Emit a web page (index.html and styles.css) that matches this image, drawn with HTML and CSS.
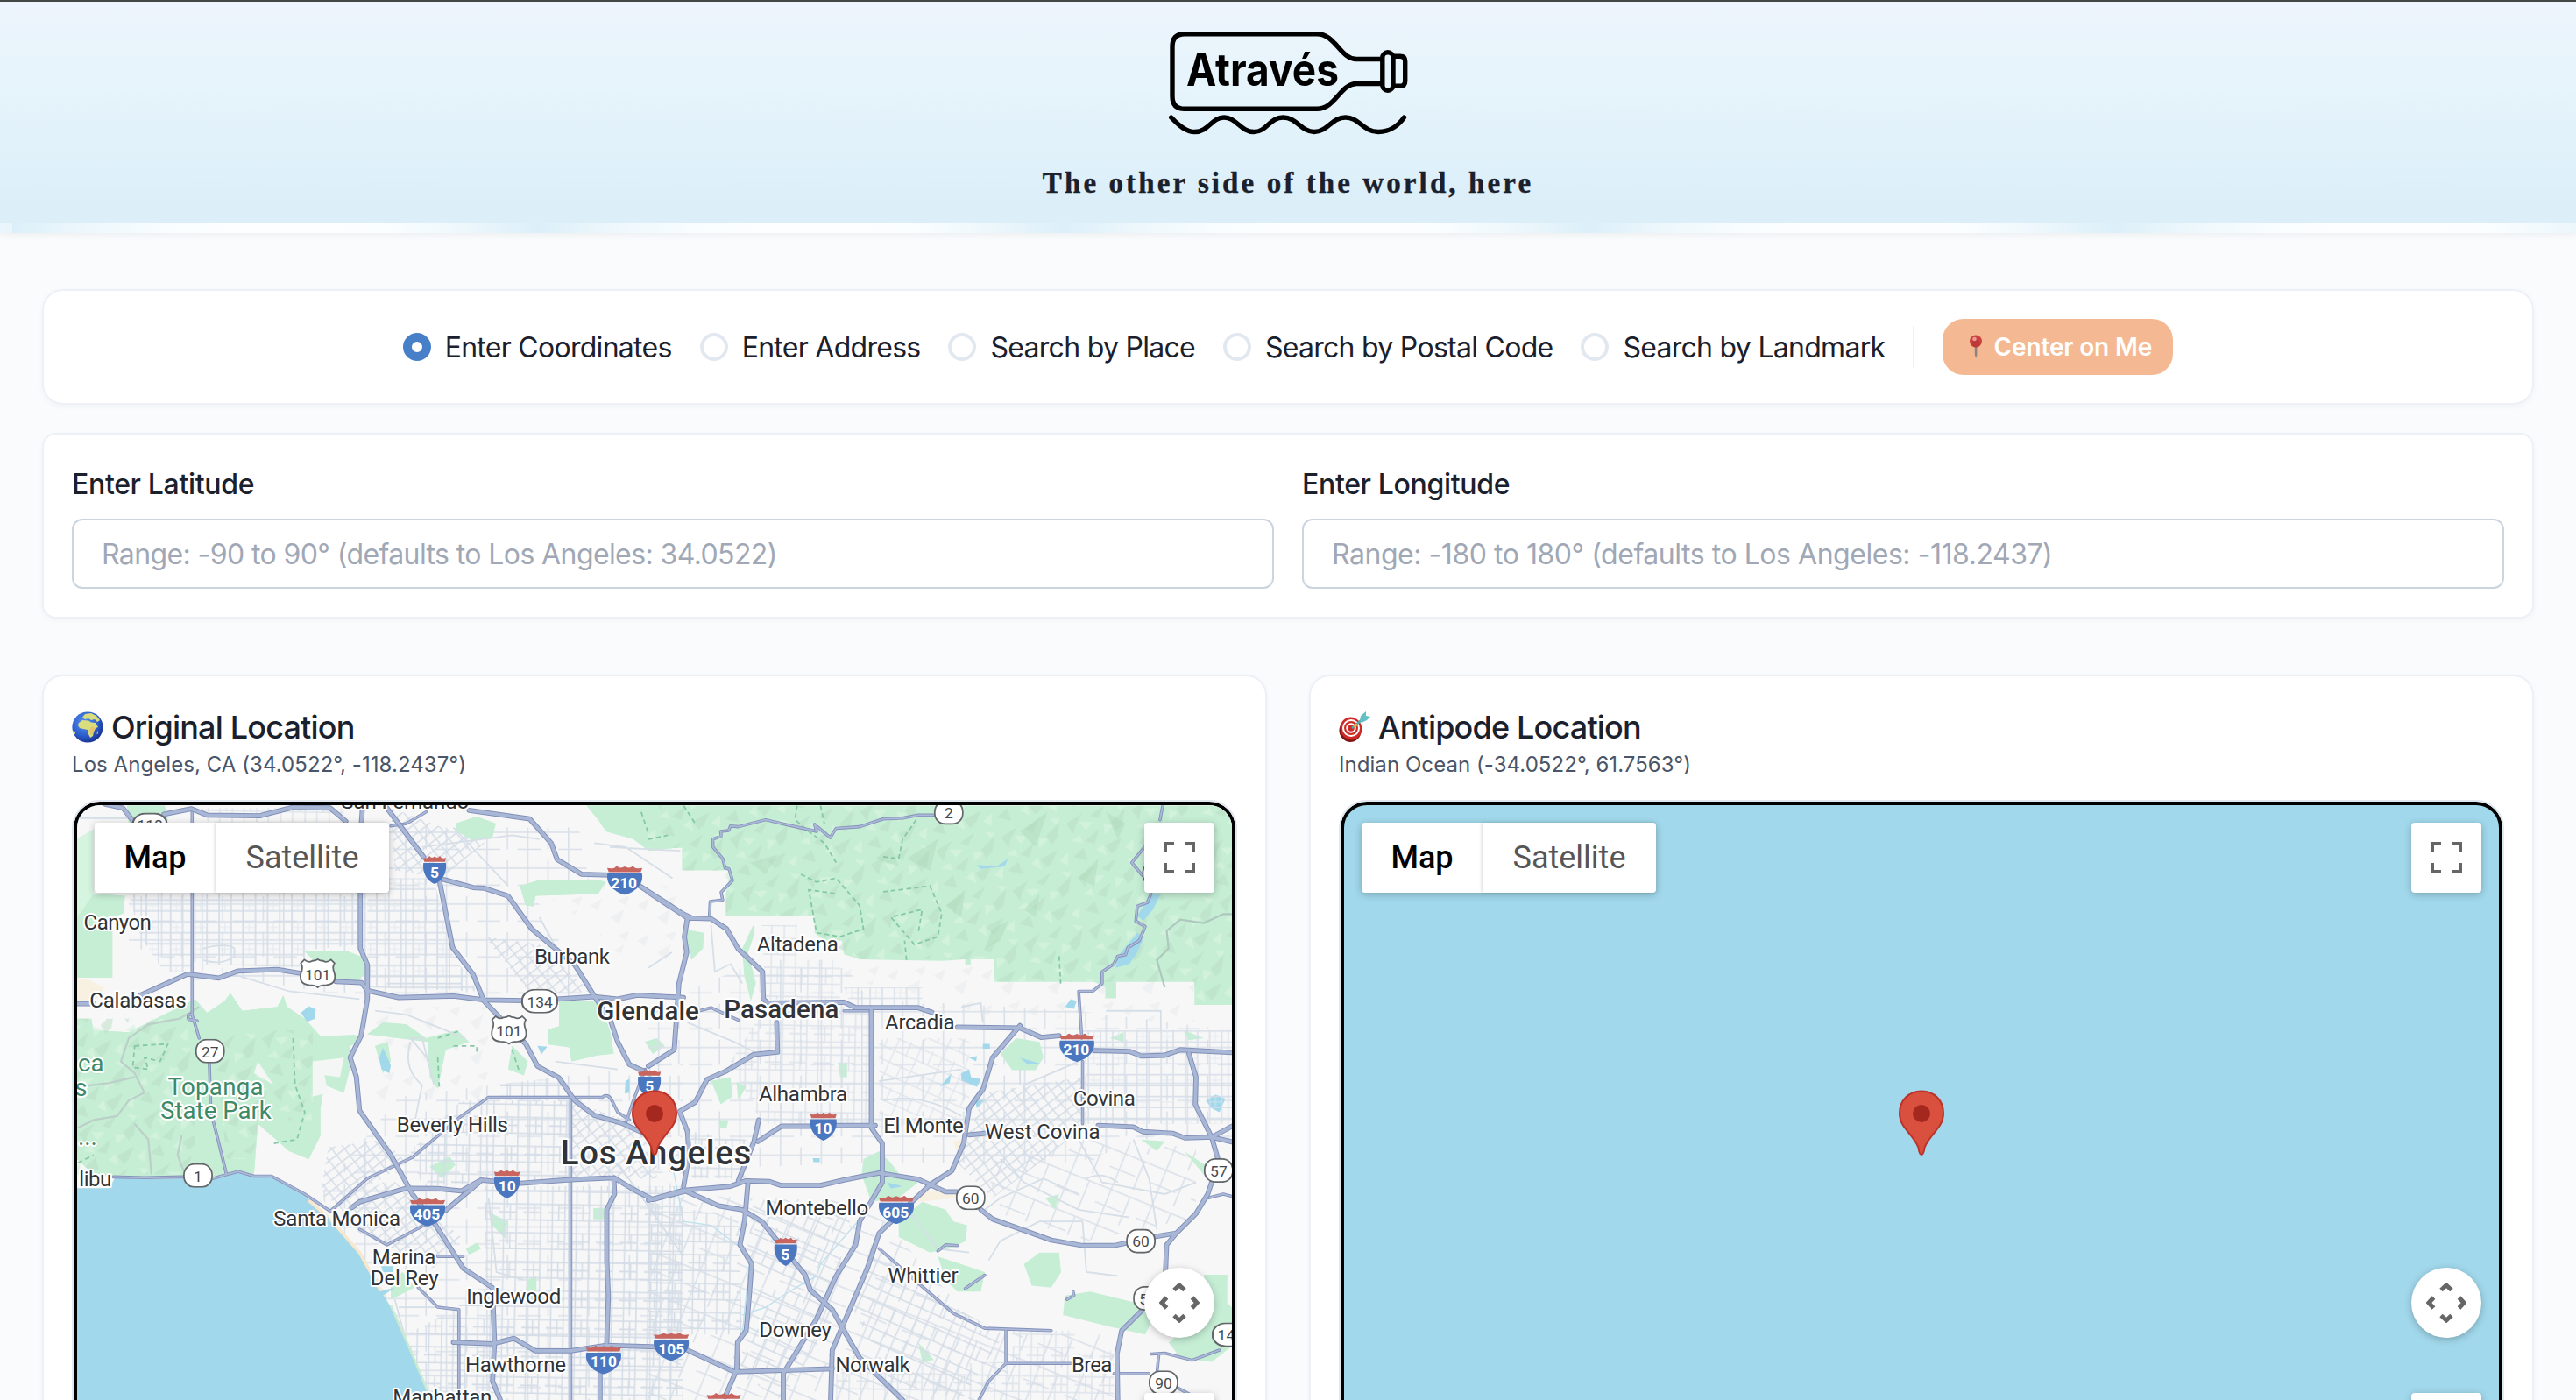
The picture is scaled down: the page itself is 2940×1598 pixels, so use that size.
FILE: index.html
```html
<!DOCTYPE html>
<html lang="en">
<head>
<meta charset="utf-8">
<title>Através</title>
<link rel="stylesheet" href="styles.css">
</head>
<body>
<header class="hero">
  <svg class="logo" viewBox="1332 30 278 130" role="img" aria-label="Através">
    <g fill="none" stroke="#000" stroke-width="5.4" stroke-linecap="round" stroke-linejoin="round">
      <path d="M1577 67.5H1548C1530 67.500 1524 38.700 1503 38.700H1352Q1338 38.700 1338 53V110Q1338 124.300 1352 124.300H1503C1524 124.300 1530 95.500 1548 95.500H1577"/>
      <rect x="1577.800" y="59.800" width="12.200" height="43.400" rx="6"/>
      <path d="M1591 64.300H1598Q1603.700 64.300 1603.700 70V92.500Q1603.700 98.300 1598 98.300H1591"/>
      <path d="M1336.700 134C1346 144 1354 150.500 1363.600 150.500C1379 150.500 1383 134 1397 134C1411 134 1416 150.500 1431 150.500C1446 150.500 1449 134 1464.500 134C1480 134 1485 150.500 1500 150.500C1515 150.500 1520 134 1535.600 134C1551 134 1556 150.500 1573 150.500C1587 150.500 1597 142 1602.500 134"/>
    </g>
    <text class="logo-text" x="1354" y="98" textLength="174" lengthAdjust="spacingAndGlyphs">Através</text>
  </svg>
  <p class="tagline">The other side of the world, here</p>
  <div class="surf"></div>
</header>

<main class="page">
  <section class="card modes">
    <label class="mode"><i class="dot on"></i><span>Enter Coordinates</span></label>
    <label class="mode"><i class="dot"></i><span>Enter Address</span></label>
    <label class="mode"><i class="dot"></i><span>Search by Place</span></label>
    <label class="mode"><i class="dot"></i><span>Search by Postal Code</span></label>
    <label class="mode"><i class="dot"></i><span>Search by Landmark</span></label>
    <span class="rule"></span>
    <button class="center-me">
      <svg class="pushpin" viewBox="0 0 16 28"><path d="M6.800 12h2.600v11L8.200 27 6.800 23z" fill="#8f8580"/><circle cx="8" cy="7.500" r="7" fill="#cb4340"/><circle cx="8" cy="10" r="4.500" fill="#b02f2f" opacity=".5"/><circle cx="6.500" cy="5" r="2.300" fill="#eb9a93"/></svg>
      <span>Center on Me</span>
    </button>
  </section>

  <section class="card coords">
    <div class="field"><label>Enter Latitude</label><div class="input lat">Range: -90 to 90° (defaults to Los Angeles: 34.0522)</div></div>
    <div class="field"><label>Enter Longitude</label><div class="input lng">Range: -180 to 180° (defaults to Los Angeles: -118.2437)</div></div>
  </section>

  <div class="maps">
    <section class="card place">
      <h2><svg class="emoji" viewBox="0 0 36 36"><defs><radialGradient id="sea" cx=".4" cy=".35" r=".7"><stop offset="0" stop-color="#5b93ea"/><stop offset=".6" stop-color="#2d5fce"/><stop offset="1" stop-color="#172d8c"/></radialGradient></defs><circle cx="18" cy="18" r="17.600" fill="url(#sea)"/><path d="M8 13l4-3 7 .5 3 2 5 .5 3 5-3 1-2 4-1 5-3 2-2-4-1-5-5-1-4-1-2-3zM12 7l3-4 7-1 6 3 4 5-3 2-3-3-4 1-3-2-4 1zM1 22l3 1 0 3-2-1zM29 23l1-1-.5 4-1 0z" fill="#d9dd7e"/><path d="M20 21l3-4 4 2-3 6-2 3z" fill="#e8c46a"/></svg><span>Original Location</span></h2>
      <p class="where">Los Angeles, CA (34.0522°, -118.2437°)</p>
      <div class="map">
        <svg class="tiles" viewBox="88 919 1318 760">
          <defs>
            <pattern id="wide" width="104" height="92" patternUnits="userSpaceOnUse"><path d="M0 20H104M0 64H60M26 0V92M78 0V64" fill="none" stroke="#d9e0e9" stroke-width="3.500"/></pattern>
            <pattern id="wideT" width="112" height="98" patternUnits="userSpaceOnUse" patternTransform="rotate(22)"><path d="M0 20H112M0 64H70M26 0V98M78 20V98" fill="none" stroke="#d9e0e9" stroke-width="3.500"/></pattern>
            <pattern id="grid" width="62" height="56" patternUnits="userSpaceOnUse"><path d="M0 6H62M0 34H62M9 0V56M40 0V56" fill="none" stroke="#d4dce6" stroke-width="3.600"/><path d="M24 6V34M9 20H40" stroke="#dfe5ec" stroke-width="2"/></pattern>
            <pattern id="gridB" width="62" height="74" patternUnits="userSpaceOnUse" patternTransform="rotate(1)"><path d="M0 9H62M0 50H62M12 0V74M44 0V74M0 30H44M28 9V50" fill="none" stroke="#d4dce6" stroke-width="3.400"/></pattern>
            <pattern id="gridR" width="50" height="42" patternUnits="userSpaceOnUse" patternTransform="rotate(-38)"><path d="M0 6H50M0 26H50M8 0V42M34 0V42" fill="none" stroke="#d4dce6" stroke-width="3.200"/></pattern>
            <pattern id="gridS" width="60" height="64" patternUnits="userSpaceOnUse" patternTransform="rotate(24)"><path d="M0 6H60M0 38H60M8 0V64M40 0V38" fill="none" stroke="#d4dce6" stroke-width="3.300"/></pattern>
            <pattern id="facets" width="170" height="140" patternUnits="userSpaceOnUse" patternTransform="rotate(-12)"><path d="M6 30L52 12 28 40 20 60zM70 22L112 4 88 34zM120 50L160 24 146 62 128 74zM44 84L86 60 66 96zM92 106L140 92 118 122 104 130zM6 118L36 100 40 134z" fill="#b7dec4" opacity=".5"/><path d="M40 34L74 40 52 56zM100 50L122 60 96 78zM10 76L34 66 38 88zM138 8L164 16 150 26zM68 112L88 100 90 132zM140 120L166 104 158 136z" fill="#d6f3df" opacity=".75"/></pattern>
            <pattern id="hills" width="120" height="90" patternUnits="userSpaceOnUse"><path d="M10 30L40 12 30 44zM60 60L96 40 84 80zM80 16L110 6 100 30z" fill="#eff0f1"/></pattern>
            <symbol id="inter" viewBox="0 0 90 72" preserveAspectRatio="none"><path d="M5 15L1 5 12 6Q20 6 25 0 34 8 45 1 56 8 65 0 70 6 78 6L89 5 85 15z" fill="#c9655f"/><path d="M2 18H88C94 45 72 64 45 72 18 64-4 45 2 18z" fill="#4a77c0"/></symbol>
            <symbol id="oval" viewBox="0 0 76 62" preserveAspectRatio="none"><rect x="2" y="2" width="72" height="58" rx="27" fill="#fff" stroke="#63676a" stroke-width="4"/></symbol>
            <symbol id="us" viewBox="0 0 96 76" preserveAspectRatio="none"><path d="M5 12L14 3Q25 12 34 6 42 6 48 2 54 6 62 6 71 12 82 3L91 12Q84 22 91 38 97 66 70 68 54 68 48 74 42 68 26 68-1 66 5 38 12 22 5 12z" fill="#fff" stroke="#63676a" stroke-width="4"/></symbol>
            <g id="thick" fill="none" stroke-linejoin="round" stroke-linecap="round">
              <g transform="translate(80 900) scale(.44643 .44516)">
                <path d="M90 40L135 50 160 82M240 66L310 52 350 68 485 70 570 48 665 50 705 84M748 40L742 130V410L760 452V540L744 634 716 690 732 740 740 826 820 940 875 1040 935 1120 1005 1230 1080 1280 1085 1420 1080 1520 1100 1568"/>
                <path d="M1020 56L1175 78 1230 140 1245 182 1308 220 1380 222M1450 246L1568 322 1590 332M810 50L904 176M950 232L1030 254 1060 256 1120 276 1180 360 1290 452 1340 532 1380 590 1400 650 1430 708 1470 726"/>
                <path d="M945 240L978 408 1030 476 1058 545 1120 610 1165 655 1195 712 1250 742 1290 800 1340 838 1410 858 1480 890"/>
                <path d="M180 530L300 476 380 486 430 468 530 464 590 474M680 495L745 498 760 518 840 536 980 532 1060 542 1160 544M1245 540L1340 534 1400 540 1450 530 1568 536"/>
                <path d="M20 552H60M720 1075L740 1060 860 1025 940 1026 1000 1032 1050 1004 1090 1008M1145 1013L1280 1003 1390 998 1440 1028 1490 1054 1568 1034M1390 998L1392 1040 1372 1080 1372 1210 1376 1300 1372 1420M960 1082L1048 1008"/>
                <path d="M980 1420L1080 1424 1135 1410 1190 1442 1280 1442 1370 1428 1500 1432M1355 1500V1568"/>
              </g>
              <g transform="translate(740 900) scale(.44643 .44516)">
                <path d="M0 266L100 332 160 334 200 360 230 412 292 470 294 540 306 550 500 548 530 562 690 562 725 574M790 612L950 614 1004 638 1050 634M1140 672L1230 674 1260 686 1320 684 1360 670 1492 677"/>
                <path d="M100 332L92 380 98 420 78 500 66 670 0 712M328 600L330 676 270 682 200 724 150 746 120 804 80 828 100 880 104 940 90 1020M230 1006L270 905 282 850M280 905L340 866 420 866M482 864L580 864M820 888L860 884M1150 864L1240 868 1264 880 1340 884 1372 896 1440 894 1492 866"/>
                <path d="M950 608L880 690 856 770 820 820 806 910 776 980 720 1016 590 1140 560 1230 470 1440 466 1568M570 570V870L598 910 598 1010 540 1110 530 1170 480 1250 430 1360 345 1500 345 1568"/>
                <path d="M0 1056L90 1030 210 1020 250 1006 310 1008 340 1018 440 1018 500 1004 590 986 690 1002 760 1034 800 1034M850 1080L880 1104 1030 1158 1110 1172 1190 1172 1230 1164M1290 1150L1350 1140 1400 1090 1430 1040 1440 1010M1350 1140L1325 1170 1322 1240M1260 1340L1210 1390 1198 1450 1200 1568M1382 680L1400 740 1398 810 1440 894 1456 950M1440 894L1492 906"/>
                <path d="M90 1030L180 1070 240 1080 290 1110 330 1160M370 1210L400 1246 414 1286 470 1336 500 1390 540 1460 650 1568M255 1006L246 1110 234 1170 264 1220 258 1300 250 1390 228 1420 226 1490 196 1560M100 1440L220 1496 470 1488"/>
              </g>
            </g>
            <g id="thin" fill="none" stroke-linejoin="round" stroke-linecap="round">
              <g transform="translate(80 900) scale(.44643 .44516)">
                <path d="M312 52V90M312 260V470V580L330 640M312 580Q298 576 303 592L325 596M356 705L360 830 378 900 400 990M110 996L190 998 290 996M365 1000L400 990 430 982 470 994 515 994 600 1040 665 1084M665 1084L760 1000 875 946 1000 840 1070 792 1360 792Q1375 780 1385 800L1400 830 1430 850M1280 800V1568M740 1130L810 1170 935 1104M890 1280L940 1330 994 1336V1568M940 1200H1005M820 96L860 90 910 60M1470 720L1440 800 1420 860"/>
              </g>
              <g transform="translate(740 900) scale(.44643 .44516)">
                <path d="M730 68L690 68 650 76 600 78 540 98 480 102 465 126 425 92 430 110 350 92 300 80 230 98 210 96 205 108 185 110 186 122 165 130 165 150 190 180 196 204 206 206 215 236 186 266 190 286 158 290 156 330M1315 44L1308 80M1268 150L1236 190 1262 222M1285 270L1276 292 1250 302 1246 340 1270 354 1255 390 1226 408 1220 426 1200 430 1190 450 1160 470 1160 500 1136 520 1100 520 1108 640M1110 700V860M130 570L160 562 230 594M500 570H570M590 1180L680 1260 780 1346 860 1384 1030 1390M914 1390V1474L870 1520 845 1568M915 1474H1080M1190 1500H1280M1340 1530L1400 1562M1285 1450L1320 1448 1390 1466 1460 1440M1305 1450L1300 1500M810 1282L860 1248M1070 1310L1088 1300 1086 1290M1430 1050L1470 1040 1492 1046M740 1186L760 1170 790 1172"/>
              </g>
            </g>
          </defs>
          <rect x="80" y="900" width="1340" height="800" fill="#f7f7f7"/>
          <!-- hills, arterial streets and parkland -->
          <g transform="translate(80 900) scale(.44643 .44516)">
            <path d="M1180 250H1568V440H1480L1400 420 1300 330z" fill="url(#hills)"/>
            <path d="M760 560H1080L1080 800H780z" fill="url(#hills)"/>
            <path d="M150 100H1300L1330 250 1180 260 1330 540 760 540 330 470 150 400zM840 790L1568 700V1568H900L640 1040z" fill="url(#wide)"/>
            <g id="parkL" fill="#c6eed5">
              <path d="M18 130L60 105V270L140 275 136 320 108 330V485H18z"/>
              <path d="M18 590H54L60 620 150 625 200 600 320 540 350 575 395 545 410 525 440 570 530 560 545 530 555 560 600 590 640 635 730 632 740 650 716 660 720 700 700 780 650 760 640 820 640 890 610 950 560 930 515 890 480 860 470 990 430 980 400 992 365 1000 115 996 60 990 18 950z"/>
              <path d="M598 416H706L756 436V470L735 496H680zM145 44H242L250 80 230 90 150 88zM1320 44H1568V150L1480 160 1440 130 1370 110 1350 80zM985 90L1040 72 1088 90 1080 124 1030 134 990 110zM1150 250L1200 235H1350L1370 240 1350 270 1190 275 1185 302 1165 300z"/>
              <path d="M1250 545H1350L1380 620 1390 680 1350 684 1282 700 1276 664 1222 656 1222 618 1250 610zM760 630L800 600 860 605 910 640 990 620 1020 650 960 670 940 770 920 740 915 650 840 640z"/>
              <path d="M780 660L812 650 820 700 800 730zM1130 660L1170 700 1160 735 1120 720zM920 970L970 944 985 965 950 1000zM1070 1086L1118 1110 1112 1154 1080 1120zM1168 1260L1192 1252V1314L1165 1300zM1338 1076H1365V1104H1338zM1012 1180L1040 1165 1050 1180 1020 1195zM820 1270L850 1240 880 1280 840 1300 820 1310zM1470 650L1500 640 1520 660 1490 680z"/>
            </g>
            <use href="#parkL" style="fill:url(#facets)"/>
            <path d="M18 590H320V990H18zM365 620H620V850H480L470 950H400z" fill="url(#facets)"/>
            <path d="M18 130L60 105V270L18 330z" fill="#d6f5e1"/>
            <path d="M18 490H45L88 510 60 550H18z" fill="#f8f1e2"/>
            <path d="M620 700L700 690 690 740 650 735 660 780 620 790zM480 700L520 760 470 730z" fill="#f3f6f4"/>
            <g fill="none" stroke="#85c8a6" stroke-width="4" stroke-dasharray="12 9"><path d="M165 660L250 655 230 700 190 690 200 720 160 715zM570 640L575 760 600 830 580 900 520 910M940 640L1000 620M980 660H1040V680M940 690L944 770M20 960L60 940M1460 60L1480 120 1530 130M1130 670L1150 730"/></g>
            <g fill="none" stroke="#bccfc9" stroke-width="5"><path d="M330 560L280 590 200 605 150 640 130 700 165 730 190 780 150 800 120 840 60 850 20 870M20 765L100 755 165 740M165 860L200 900 208 990M285 890L275 940 290 980"/></g>
          </g>
          <g transform="translate(740 900) scale(.44643 .44516)">
            <path d="M500 440H1395V600L800 580 500 480z" fill="url(#hills)"/>
            <path d="M0 560L290 440 500 440 560 540 1100 570 1492 620V900L1300 890 1100 960 560 960 0 980z" fill="url(#wide)"/>
            <path d="M0 1040L560 1060 860 1400 1190 1400V1568H0zM860 960L1100 900 1400 920V1100L1120 1160 900 1090z" fill="url(#wideT)"/>
            <g id="parkR" fill="#c6eed5">
              <path d="M0 44H1492V555H1396V496H1196V538H1168V510L1140 496H884V438H824V452H810V438L752 442 540 438 500 425 495 390H450L425 370V328H198V270L210 210H86V152H0z"/>
              <path d="M88 360L142 370 140 410 110 440zM240 410L268 350 272 370 255 420 275 500 262 545 245 480zM900 680L940 640 1000 650 1010 690 990 722 930 722zM550 950L590 930 620 960 650 1000 690 1010 640 1050 570 1060 545 990zM640 1110L700 1060 760 1080 780 1110 815 1120 812 1160 770 1180 720 1190 640 1150zM740 1200L800 1220 860 1240 850 1290 790 1290 760 1260z"/>
              <path d="M960 1220L1000 1190 1050 1190 1055 1240 1030 1280 980 1275zM1065 1300L1130 1290 1250 1320 1290 1360 1270 1400 1180 1380 1060 1350zM1420 1247H1480V1320L1492 1330V1430L1440 1470 1360 1460 1330 1420 1380 1380 1430 1360zM160 750L210 740 215 790 185 810zM225 752L250 764 230 800zM485 704H508V740H490zM1015 1050L1050 1040 1040 1080zM180 850H205L200 870H182zM1180 640L1215 625V650zM1260 900L1320 905 1300 930zM1370 620L1420 640 1380 645zM690 1420L730 1465 700 1470zM1370 930L1430 970 1420 990z"/>
            </g>
            <path d="M0 44H1492V555H1396V496H1196L1140 496H884V438H752L540 438 450 390 425 328H198V210H86V152H0z" fill="url(#facets)"/>
            <path d="M660 180L740 130 720 210zM880 360L920 340 900 390 860 410zM580 180L620 150 640 200zM960 310L1000 270 990 330zM260 190L330 170 300 220zM950 110L1020 60 990 150zM1100 230L1150 180 1140 250zM1170 60L1220 90 1200 130zM760 300L810 260 800 330z" fill="#a9d4b7" opacity=".4"/>
            <g fill="none" stroke="#85c8a6" stroke-width="4" stroke-dasharray="12 8"><path d="M380 44L375 80 410 110 450 140 480 190M440 44L450 90M685 80L650 130 640 180 600 175M390 220L430 240 480 230 540 300 550 360 490 380 430 370 410 260 480 270M600 265L720 250 750 320 740 380 680 400 620 330 700 310 690 370M660 440L655 390M0 130L50 120M90 44L120 90M1050 430L1054 500"/></g>
            <g fill="#a1d8eb"><path d="M840 196L890 200 920 180 910 200 850 206zM1285 270H1310L1290 310 1265 340 1250 326zM1250 370L1268 380 1250 420 1230 450 1195 460 1200 430zM1065 560L1080 540 1095 545 1088 565zM820 690L840 686 838 700zM800 730L820 720 825 740 850 745 840 765 800 750zM745 765L775 730 770 755zM835 800L860 798 840 820zM855 655H873V667H855zM1425 800L1450 785 1475 795 1460 830 1440 820zM420 948H438V958H422zM950 690L1000 705 970 708zM0 730L30 760 5 800zM610 1010L650 1020 620 1026z"/></g>
            <path d="M1492 322L1470 322 1420 345 1360 336 1325 365 1330 410 1300 440 1320 510" fill="none" stroke="#aec8bf" stroke-width="5"/>
            <path d="M700 1030L780 1036 790 1050 690 1060zM780 905L800 900 795 950z" fill="#f8f0e0"/>
            <path d="M60 960L90 1110 160 1120 240 1180 258 1220 240 1400M570 1070L440 1220 430 1250 360 1290 300 1330 240 1350" fill="none" stroke="#b9e2ee" stroke-width="3"/>
          </g>
          <!-- local streets -->
          <g transform="translate(80 900) scale(.44643 .44516)">
            <path d="M150 270H740V400L600 415 598 460 330 450 180 380zM180 380L310 400V470H240z" fill="url(#grid)"/>
            <path d="M330 50H700V86H330z" fill="url(#gridB)" opacity=".7"/>
            <path d="M760 230H930L975 420 1040 520 760 510z" fill="url(#grid)"/>
            <path d="M820 50L1060 140 950 230 830 210zM1060 380L1200 400 1330 520 1180 530zM680 1070L820 1000 1000 1150 930 1230 740 1140zM660 920L800 900 860 960 690 1070 640 1040z" fill="url(#gridR)"/>
            <path d="M1000 800H1280V1000L900 1020 870 930z" fill="url(#gridB)"/>
            <path d="M1280 800L1500 880V1000H1280z" fill="url(#gridR)"/>
            <path d="M1060 1020H1568V1568H900L860 1400 990 1330 1060 1270z" fill="url(#gridB)"/>
            <path d="M1100 760L1240 740 1290 800H1100z" fill="url(#grid)"/>
            <g fill="none" stroke="#d6dee7" stroke-width="4"><path d="M310 490L430 480 560 520 740 540M340 410Q400 395 420 410V430Q390 455 340 440M20 76H150M980 100L1120 250M900 150L1130 120 1200 130M1340 140L1420 150 1540 230M870 650Q850 720 900 760L880 860M920 700L870 640 900 640 930 760M1240 700L1400 720M810 500L1000 500M780 570L860 580 1010 640M1200 330L1260 440M1380 150L1560 160M1070 1050L1090 1240 1160 1260M830 1310L900 1568M840 1330L940 1330M1400 960L1568 1200"/></g>
          </g>
          <g transform="translate(740 900) scale(.44643 .44516)">
            <path d="M290 350H380V440H490V540H300zM300 560H570V860H290L210 700z" fill="url(#gridB)" opacity=".7"/>
            <path d="M500 510H700V560H520zM1110 620H1492V860H1120V740z" fill="url(#grid)" opacity=".85"/>
            <path d="M860 780L1110 740V870L1000 960 880 1050 790 960z" fill="url(#gridR)"/>
            <path d="M590 640H820V880H590z" fill="url(#gridS)" opacity=".6"/>
            <path d="M110 880L250 900V1000H110zM0 1060L230 1100 240 1400 0 1400z" fill="url(#gridB)"/>
            <path d="M270 1050L520 1090 480 1260 410 1330 250 1200zM270 1280L420 1300 480 1350 340 1568 230 1500zM570 1170L800 1340 910 1400 800 1568 620 1520 520 1330z" fill="url(#gridS)"/>
            <path d="M480 1490L900 1470 1190 1440V1568H480zM930 1390H1090V1470H930z" fill="url(#gridB)" opacity=".7"/>
            <g fill="none" stroke="#d6dee7" stroke-width="4"><path d="M160 350L170 470 210 450 240 500M0 460L60 420M100 600L220 650 280 680M590 750L800 720M600 800Q700 780 800 840M900 950L960 1010 1100 1080 1230 1100M860 1080L900 1050 1010 1000 1100 1040M1100 900L1160 1010 1320 1040 1400 1010M1240 900L1280 1000 1300 1130M870 1210L900 1160 1000 1110 1110 1110 1120 1240 1200 1250M960 800V760L1100 700M950 720V760M800 560L850 550 855 600M1170 570H1310V620M1120 1000Q1160 980 1200 1010M640 1050L740 1180 820 1190"/></g>
          </g>
          <!-- ocean -->
          <g transform="translate(80 900) scale(.44643 .44516)">
            <path d="M18 1025L100 1025 115 998 190 1002 290 1000 400 994 430 984 470 996 515 998 600 1044 660 1100 740 1190 790 1280 820 1330 870 1440 925 1568V1760H0V1025z" fill="#a1d8eb"/>
            <path d="M665 1104L740 1190 790 1280 805 1300M610 1056L660 1100" fill="none" stroke="#f7e7cc" stroke-width="8"/>
            <path d="M820 1326L870 1440 920 1560" fill="none" stroke="#c9ead3" stroke-width="6"/>
            <g fill="#a1d8eb"><path d="M590 575L610 558 628 566 626 590 606 598zM790 690L800 665 820 710 816 730 796 720zM1195 660L1220 662 1205 682zM1420 750L1430 745V780L1418 782zM795 1225H825V1240H800zM790 1290L830 1280 800 1300z"/></g>
          </g>
          <use href="#thin" stroke="#8492ba" stroke-width="8"/>
          <use href="#thin" stroke="#adb9d8" stroke-width="4"/>
          <use href="#thick" stroke="#8290b9" stroke-width="13"/>
          <use href="#thick" stroke="#a9b7d6" stroke-width="8.500"/>
          <!-- route shields -->
          <g class="shields" transform="translate(80 900) scale(.44643 .44516)">
            <use href="#oval" x="158" y="62" width="92" height="62"/><text x="204" y="108">118</text>
            <use href="#us" x="585" y="436" width="96" height="76"/><text x="633" y="491">101</text>
            <use href="#us" x="1074" y="581" width="96" height="76"/><text x="1122" y="635">101</text>
            <use href="#oval" x="1153" y="514" width="95" height="63"/><text x="1201" y="561">134</text>
            <use href="#oval" x="320" y="642" width="76" height="63"/><text x="358" y="690">27</text>
            <use href="#oval" x="289" y="961" width="76" height="63"/><text x="327" y="1008">1</text>
            <g class="hwy">
              <use href="#inter" x="902" y="173" width="60" height="72"/><text x="932" y="229">5</text>
              <use href="#inter" x="1372" y="199" width="92" height="74"/><text x="1416" y="256">210</text>
              <use href="#inter" x="1451" y="721" width="60" height="72"/><text x="1481" y="777">5</text>
              <use href="#inter" x="1083" y="978" width="68" height="73"/><text x="1117" y="1034">10</text>
              <use href="#inter" x="868" y="1050" width="92" height="73"/><text x="912" y="1106">405</text>
              <use href="#inter" x="1318" y="1428" width="92" height="74"/><text x="1364" y="1483">110</text>
              <use href="#inter" x="1491" y="1395" width="92" height="73"/><text x="1537" y="1451">105</text>
            </g>
          </g>
          <g class="shields" transform="translate(740 900) scale(.44643 .44516)">
            <use href="#oval" x="730" y="30" width="76" height="63"/><text x="768" y="76">2</text>
            <use href="#oval" x="1262" y="187" width="76" height="63"/>
            <use href="#oval" x="786" y="1018" width="76" height="63"/><text x="824" y="1065">60</text>
            <use href="#oval" x="1221" y="1129" width="76" height="63"/><text x="1259" y="1175">60</text>
            <use href="#oval" x="1420" y="948" width="76" height="63"/><text x="1458" y="995">57</text>
            <use href="#oval" x="1239" y="1276" width="76" height="63"/><text x="1277" y="1323">57</text>
            <use href="#oval" x="1440" y="1369" width="95" height="63"/><text x="1488" y="1415">142</text>
            <use href="#oval" x="1279" y="1492" width="76" height="63"/><text x="1317" y="1539">90</text>
            <g class="hwy">
              <use href="#inter" x="1050" y="628" width="91" height="73"/><text x="1094" y="684">210</text>
              <use href="#inter" x="413" y="830" width="69" height="73"/><text x="447" y="886">10</text>
              <use href="#inter" x="588" y="1044" width="92" height="73"/><text x="632" y="1100">605</text>
              <use href="#inter" x="321" y="1151" width="60" height="73"/><text x="350" y="1208">5</text>
              <use href="#inter" x="148" y="1550" width="90" height="73"/>
            </g>
          </g>
          <!-- place names -->
          <g class="names" transform="translate(80 900) scale(.44643 .44516)">
            <text x="693" y="52" textLength="327">San Fernando</text>
            <text x="35" y="362" textLength="173">Canyon</text>
            <text x="50" y="562" textLength="247">Calabasas</text>
            <text x="1187" y="450" textLength="193">Burbank</text>
            <text x="835" y="880" textLength="285">Beverly Hills</text>
            <text x="520" y="1122" textLength="325">Santa Monica</text>
            <text x="772" y="1219" textLength="163">Marina</text>
            <text x="768" y="1273" textLength="174">Del Rey</text>
            <text x="1013" y="1321" textLength="242">Inglewood</text>
            <text x="1010" y="1497" textLength="258">Hawthorne</text>
            <text x="825" y="1580" textLength="253">Manhattan</text>
            <text x="23" y="1020" textLength="83">libu</text>
            <g class="green"><text x="250" y="786" textLength="244">Topanga</text><text x="231" y="848" textLength="284">State Park</text><text x="20" y="726">ca</text><text x="12" y="788">s</text><text x="20" y="914">...</text></g>
            <text class="town" x="1347" y="594" textLength="261">Glendale</text>
            <text class="city" x="1254" y="964" textLength="487">Los Angeles</text>
          </g>
          <g class="names" transform="translate(740 900) scale(.44643 .44516)">
            <text x="277" y="418" textLength="209">Altadena</text>
            <text class="town" x="193" y="588" textLength="294">Pasadena</text>
            <text x="605" y="618" textLength="178">Arcadia</text>
            <text x="282" y="803" textLength="227">Alhambra</text>
            <text x="601" y="882" textLength="205">El Monte</text>
            <text x="860" y="899" textLength="295">West Covina</text>
            <text x="1086" y="813" textLength="159">Covina</text>
            <text x="299" y="1094" textLength="264">Montebello</text>
            <text x="612" y="1267" textLength="180">Whittier</text>
            <text x="283" y="1407" textLength="185">Downey</text>
            <text x="478" y="1496" textLength="191">Norwalk</text>
            <text x="1082" y="1497" textLength="104">Brea</text>
          </g>
        </svg>
        <svg class="marker" viewBox="0 0 54 76"><path d="M27 1.500C12 1.500 2 12.500 2 26.500C2 44 17 49 23.500 66Q24.500 74 27 74Q29.500 74 30.500 66C37 49 52 44 52 26.500C52 12.500 42 1.500 27 1.500z" fill="#d9503f" stroke="#bb3329" stroke-width="2"/><circle cx="27" cy="27" r="10" fill="#a5281f"/></svg>
        <div class="types"><b>Map</b><span>Satellite</span></div>
        <div class="ctl full"><svg viewBox="0 0 36 36"><path d="M0 0H12V4H4V12H0zM24 0H36V12H32V4H24zM0 24H4V32H12V36H0zM32 24H36V36H24V32H32z" fill="#666"/></svg></div>
        <div class="ctl pan"><svg viewBox="0 0 46 46" fill="none" stroke="#666" stroke-width="5"><path d="M17 8.500L23 3 29 8.500M17 37.500L23 43 29 37.500M8.500 17L3 23 8.500 29M37.500 17L43 23 37.500 29"/></svg></div>
        <div class="ctl zoom"></div>
      </div>
    </section>

    <section class="card place">
      <h2><svg class="emoji" viewBox="0 0 36 36"><ellipse cx="13" cy="22" rx="12.500" ry="13" transform="rotate(-20 13 22)" fill="#7e1714"/><ellipse cx="14" cy="19.500" rx="12.300" ry="13" transform="rotate(-20 14 19.500)" fill="#cf2b26"/><g fill="none" stroke="#fff" stroke-width="2"><circle cx="14" cy="19" r="9"/><circle cx="14" cy="19" r="4.800"/></g><path d="M15 19L28 8" stroke="#4fa9ae" stroke-width="2.600"/><path d="M24 10L25 5 31 0 31 5 36 6 32 10 26 13z" fill="#63c0c4"/><path d="M17 17l4-2" stroke="#e2b53e" stroke-width="3"/></svg><span>Antipode Location</span></h2>
      <p class="where">Indian Ocean (-34.0522°, 61.7563°)</p>
      <div class="map">
        <svg class="marker" viewBox="0 0 54 76"><path d="M27 1.500C12 1.500 2 12.500 2 26.500C2 44 17 49 23.500 66Q24.500 74 27 74Q29.500 74 30.500 66C37 49 52 44 52 26.500C52 12.500 42 1.500 27 1.500z" fill="#d9503f" stroke="#bb3329" stroke-width="2"/><circle cx="27" cy="27" r="10" fill="#a5281f"/></svg>
        <div class="types"><b>Map</b><span>Satellite</span></div>
        <div class="ctl full"><svg viewBox="0 0 36 36"><path d="M0 0H12V4H4V12H0zM24 0H36V12H32V4H24zM0 24H4V32H12V36H0zM32 24H36V36H24V32H32z" fill="#666"/></svg></div>
        <div class="ctl pan"><svg viewBox="0 0 46 46" fill="none" stroke="#666" stroke-width="5"><path d="M17 8.500L23 3 29 8.500M17 37.500L23 43 29 37.500M8.500 17L3 23 8.500 29M37.500 17L43 23 37.500 29"/></svg></div>
        <div class="ctl zoom"></div>
      </div>
    </section>
  </div>
</main>
</body>
</html>
```
FILE: styles.css
```css
* { box-sizing: border-box; }
html { height: 1598px; overflow: hidden; }
body { margin: 0; height: 1598px; overflow: hidden; background: #fafbfd; color: #1a202c; font-family: Inter, "Liberation Sans", sans-serif; }
.hero { height: 266px; border-top: 2px solid #444845; background: linear-gradient(#edf4fc, #e6f4fb 38%, #dceff9 85%); display: flex; flex-direction: column; align-items: center; box-shadow: 0 2px 8px rgba(0,0,0,.06); }
.logo { width: 278px; height: 130px; margin: 28px 0 0 2px; flex: none; }
.logo-text { font: 700 52px Inter, sans-serif; }
.tagline { margin: 30px 0 0; font: 700 33px/38px "Liberation Serif", serif; letter-spacing: 3.1px; white-space: nowrap; -webkit-text-stroke: .4px #1a202c; }
.surf { width: 100%; height: 12px; margin-top: auto; background: repeating-linear-gradient(90deg, #dceff9 0, #eef8fc 90px, #f9fdff 180px, #fdfeff 280px, #fbfeff 420px, #eef8fc 510px, #dceff9 600px) 14px 0; }
.page { padding: 64px 48px 0; }
.card { background: #fff; border: 2px solid #edf0f6; box-shadow: 0 2px 6px rgba(0,0,0,.04); border-radius: 24px; }
.modes { height: 132px; display: flex; align-items: center; justify-content: center; gap: 32px; }
.mode { display: flex; align-items: center; gap: 16px; font-size: 32px; line-height: 40px; letter-spacing: -.72px; white-space: nowrap; }
.mode span { position: relative; top: 1px; }
.dot { width: 32px; height: 32px; border-radius: 50%; border: 4px solid #e2e8f0; background: #fff; }
.dot.on { border: 10px solid #4780c8; }
.rule { width: 2px; height: 48px; background: #edf0f6; }
.center-me { width: 263px; height: 64px; border: 0; border-radius: 24px; background: #f4b992; color: #fff; font: 600 28px Inter, sans-serif; letter-spacing: -.15px; display: flex; align-items: center; justify-content: center; gap: 13px; padding: 0 0 0 5px; white-space: nowrap; }
.pushpin { width: 16px; height: 28px; }
.coords { margin-top: 32px; height: 212px; border-radius: 16px; padding: 33px 32px 0; display: grid; grid-template-columns: 1fr 1fr; gap: 32px; }
.field label { display: block; font-size: 32px; font-weight: 500; line-height: 48px; margin-bottom: 15px; letter-spacing: -.33px; }
.input { height: 80px; border: 2px solid #cbd5e0; border-radius: 12px; padding: 0 32px; font-size: 32px; line-height: 77px; color: #a0a8b6; white-space: nowrap; }
.lat { letter-spacing: -.6px; }
.lng { letter-spacing: -.46px; }
.maps { margin-top: 64px; display: grid; grid-template-columns: 1fr 1fr; gap: 48px; }
.place { height: 1000px; padding: 32px; }
.place h2 { margin: 6px 0 0; height: 40px; display: flex; align-items: center; gap: 9px; font-size: 36px; font-weight: 500; line-height: 40px; letter-spacing: -.83px; white-space: nowrap; }
.emoji { width: 36px; height: 36px; }
.where { margin: 6px 0 0; font-size: 24px; line-height: 34px; color: #4a5568; letter-spacing: .06px; white-space: nowrap; }
.map { position: relative; margin: 25px 2px 0; height: 780px; border: 4px solid #000; outline: 2px solid #e2e8f0; border-radius: 30px; background: #a1d8eb; overflow: hidden; }
.tiles { display: block; width: 1318px; height: 760px; }
.names text { font: 400 54px Roboto, sans-serif; fill: #303438; stroke: #fff; stroke-width: 9px; paint-order: stroke; stroke-linejoin: round; }
.names .green text { font-size: 62px; fill: #3e8968; }
.names .town { font-size: 66px; font-weight: 500; }
.names .city { font-size: 86px; font-weight: 500; }
.shields text { font: 400 39px Roboto, sans-serif; text-anchor: middle; fill: #45494c; }
.shields .hwy text { font-weight: 700; fill: #fff; }
.marker { position: absolute; left: 632px; top: 325px; width: 54px; height: 76px; }
.types { position: absolute; left: 20px; top: 20px; width: 336px; height: 80px; display: flex; background: #fff; border-radius: 4px; box-shadow: 0 2px 8px rgba(0,0,0,.25); font: 36px/80px Roboto, sans-serif; color: #565656; }
.types b { width: 138px; font-weight: 500; color: #000; text-align: center; }
.types span { flex: 1; text-align: center; box-shadow: -1px 0 3px rgba(0,0,0,.15); }
.ctl { position: absolute; right: 20px; width: 80px; height: 80px; background: #fff; border-radius: 4px; box-shadow: 0 2px 8px rgba(0,0,0,.25); display: flex; align-items: center; justify-content: center; }
.full { top: 20px; }
.full svg { width: 36px; }
.pan { top: 528px; border-radius: 50%; }
.pan svg { width: 46px; }
.zoom { top: 671px; }
```
